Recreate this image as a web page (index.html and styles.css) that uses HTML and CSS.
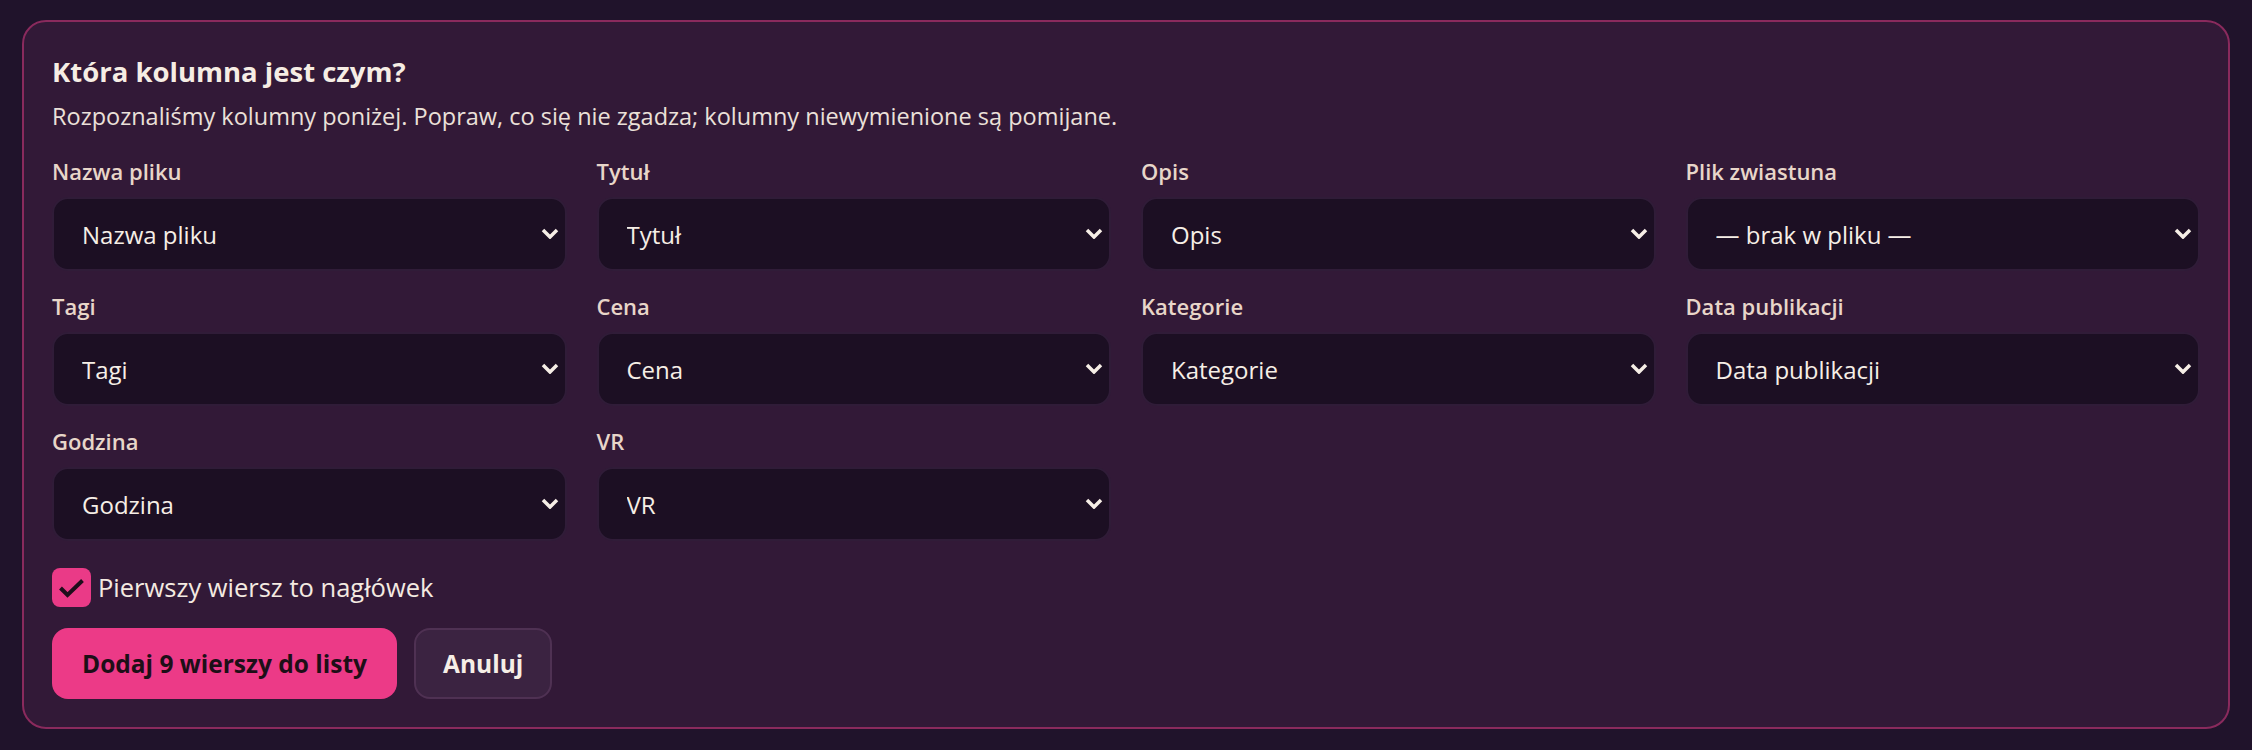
FILE: index.html
```html
<!DOCTYPE html>
<html lang="pl">

<head>
    <title>Import CSV</title>
    <meta charset="UTF-8">
    <meta name="viewport" content="width=device-width, initial-scale=1.0">
    <link rel="stylesheet" href="styles.css">
</head>

<body>
    <div class="card">
        <h2 class="title">Która kolumna jest czym?</h2>
        <p class="hint">Rozpoznaliśmy kolumny poniżej. Popraw, co się nie zgadza; kolumny niewymienione są pomijane.</p>

        <div class="mapping">
            <div class="field">
                <label for="col-file">Nazwa pliku</label>
                <div class="select-wrap">
                    <select id="col-file"><option>Nazwa pliku</option></select>
                    <svg class="chevron" viewBox="0 0 18 11"><path d="M2 2l7 7 7-7"/></svg>
                </div>
            </div>
            <div class="field">
                <label for="col-title">Tytuł</label>
                <div class="select-wrap">
                    <select id="col-title"><option>Tytuł</option></select>
                    <svg class="chevron" viewBox="0 0 18 11"><path d="M2 2l7 7 7-7"/></svg>
                </div>
            </div>
            <div class="field">
                <label for="col-desc">Opis</label>
                <div class="select-wrap">
                    <select id="col-desc"><option>Opis</option></select>
                    <svg class="chevron" viewBox="0 0 18 11"><path d="M2 2l7 7 7-7"/></svg>
                </div>
            </div>
            <div class="field">
                <label for="col-thumb">Plik zwiastuna</label>
                <div class="select-wrap">
                    <select id="col-thumb"><option>— brak w pliku —</option></select>
                    <svg class="chevron" viewBox="0 0 18 11"><path d="M2 2l7 7 7-7"/></svg>
                </div>
            </div>
            <div class="field">
                <label for="col-tags">Tagi</label>
                <div class="select-wrap">
                    <select id="col-tags"><option>Tagi</option></select>
                    <svg class="chevron" viewBox="0 0 18 11"><path d="M2 2l7 7 7-7"/></svg>
                </div>
            </div>
            <div class="field">
                <label for="col-price">Cena</label>
                <div class="select-wrap">
                    <select id="col-price"><option>Cena</option></select>
                    <svg class="chevron" viewBox="0 0 18 11"><path d="M2 2l7 7 7-7"/></svg>
                </div>
            </div>
            <div class="field">
                <label for="col-cat">Kategorie</label>
                <div class="select-wrap">
                    <select id="col-cat"><option>Kategorie</option></select>
                    <svg class="chevron" viewBox="0 0 18 11"><path d="M2 2l7 7 7-7"/></svg>
                </div>
            </div>
            <div class="field">
                <label for="col-date">Data publikacji</label>
                <div class="select-wrap">
                    <select id="col-date"><option>Data publikacji</option></select>
                    <svg class="chevron" viewBox="0 0 18 11"><path d="M2 2l7 7 7-7"/></svg>
                </div>
            </div>
            <div class="field">
                <label for="col-time">Godzina</label>
                <div class="select-wrap">
                    <select id="col-time"><option>Godzina</option></select>
                    <svg class="chevron" viewBox="0 0 18 11"><path d="M2 2l7 7 7-7"/></svg>
                </div>
            </div>
            <div class="field">
                <label for="col-vr">VR</label>
                <div class="select-wrap">
                    <select id="col-vr"><option>VR</option></select>
                    <svg class="chevron" viewBox="0 0 18 11"><path d="M2 2l7 7 7-7"/></svg>
                </div>
            </div>
        </div>

        <label class="check">
            <span class="box">
                <svg viewBox="0 0 39 39"><path d="M8.5 20l7 7 15-14.5"/></svg>
            </span>
            Pierwszy wiersz to nagłówek
        </label>

        <div class="actions">
            <button class="btn primary">Dodaj 9 wierszy do listy</button>
            <button class="btn ghost">Anuluj</button>
        </div>
    </div>
</body>

</html>
```

FILE: styles.css
```css
body {
    font-family: "Open Sans", "Noto Sans", sans-serif;
    margin: 0;
    padding: 20px 22px 20px 22px;
    background: #20132b;
    color: #f4eae1;
}
.card {
    background: #321937;
    border: 2px solid #8a2a5d;
    border-radius: 24px;
    padding: 32px 28px 28px 28px;
}
.title {
    margin: 0;
    font-size: 27.5px;
    line-height: 36px;
    font-weight: 700;
    color: #f6ede4;
}
.hint {
    margin: 10px 0 24px;
    font-size: 23.5px;
    line-height: 32px;
    color: #ebe0d9;
}
.mapping {
    display: grid;
    grid-template-columns: repeat(4, 1fr);
    column-gap: 30px;
    row-gap: 20px;
}
.field {
    display: flex;
    flex-direction: column;
    gap: 11px;
}
.field label {
    font-size: 22px;
    line-height: 30px;
    font-weight: 600;
    color: #e8d6c9;
}
.select-wrap {
    position: relative;
}
.select-wrap select {
    appearance: none;
    width: 100%;
    height: 74px;
    padding: 0 50px 0 28px;
    background: #1c0f23;
    border: 2px solid #301c38;
    border-radius: 16px;
    color: #f6eee6;
    font-family: inherit;
    font-size: 24px;
}
.chevron {
    position: absolute;
    right: 8px;
    top: 31px;
    width: 18px;
    height: 11px;
    fill: none;
    stroke: #f6eee6;
    stroke-width: 3.5;
    pointer-events: none;
}
.check {
    display: flex;
    align-items: center;
    gap: 7px;
    margin-top: 27px;
    font-size: 25.5px;
    line-height: 39px;
    color: #f4eae1;
}
.box {
    width: 39px;
    height: 39px;
    border-radius: 8px;
    background: #ea3a87;
}
.box svg {
    display: block;
    width: 39px;
    height: 39px;
    fill: none;
    stroke: #1e0e1b;
    stroke-width: 4;
}
.actions {
    display: flex;
    gap: 17px;
    margin-top: 21px;
}
.btn {
    height: 71px;
    padding: 0 30px;
    border-radius: 16px;
    font-family: inherit;
    font-size: 24.5px;
    font-weight: 700;
    cursor: pointer;
}
.primary {
    background: #ec3a87;
    border: none;
    color: #1d0f17;
}
.ghost {
    padding: 0 27px;
    background: #3b2341;
    border: 2px solid #4f3153;
    color: #f6eee6;
}
```
